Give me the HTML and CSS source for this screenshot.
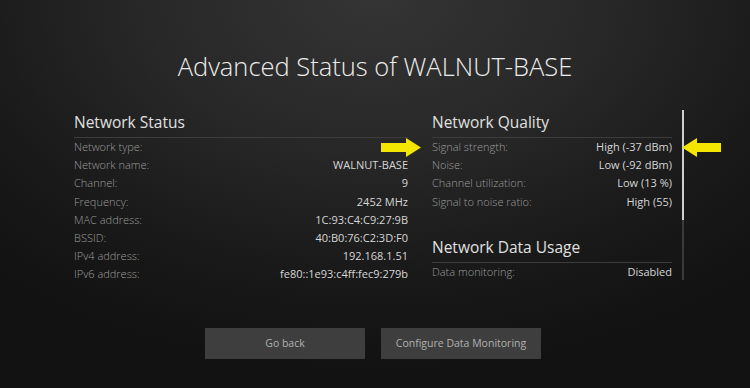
FILE: index.html
```html
<!DOCTYPE html>
<html>
<head>
<meta charset="utf-8">
<link rel="stylesheet" href="styles.css">
</head>
<body>
<main class="screen">
  <h1 class="title">Advanced Status of WALNUT-BASE</h1>
  <div class="panels">
    <section class="col col-left">
      <h2 class="heading">Network Status</h2>
      <div class="rows">
        <div class="row"><span class="label">Network type:</span><span class="value">WiFi</span></div>
        <div class="row"><span class="label">Network name:</span><span class="value">WALNUT-BASE</span></div>
        <div class="row"><span class="label">Channel:</span><span class="value">9</span></div>
        <div class="row"><span class="label">Frequency:</span><span class="value">2452 MHz</span></div>
        <div class="row"><span class="label">MAC address:</span><span class="value">1C:93:C4:C9:27:9B</span></div>
        <div class="row"><span class="label">BSSID:</span><span class="value">40:B0:76:C2:3D:F0</span></div>
        <div class="row"><span class="label">IPv4 address:</span><span class="value">192.168.1.51</span></div>
        <div class="row"><span class="label">IPv6 address:</span><span class="value">fe80::1e93:c4ff:fec9:279b</span></div>
      </div>
    </section>
    <section class="col col-right">
      <h2 class="heading">Network Quality</h2>
      <div class="rows">
        <div class="row"><span class="label">Signal strength:</span><span class="value">High (-37 dBm)</span></div>
        <div class="row"><span class="label">Noise:</span><span class="value">Low (-92 dBm)</span></div>
        <div class="row"><span class="label">Channel utilization:</span><span class="value">Low (13 %)</span></div>
        <div class="row"><span class="label">Signal to noise ratio:</span><span class="value">High (55)</span></div>
      </div>
      <h2 class="heading heading-spaced">Network Data Usage</h2>
      <div class="rows">
        <div class="row"><span class="label">Data monitoring:</span><span class="value">Disabled</span></div>
      </div>
    </section>
    <div class="scrollbar"><div class="thumb"></div></div>
  </div>
  <div class="buttons">
    <button class="btn">Go back</button>
    <button class="btn">Configure Data Monitoring</button>
  </div>
  <svg class="arrow arrow-right" width="40" height="19" viewBox="0 0 40 19"><polygon points="0,5 25,5 25,0 40,9.5 25,19 25,14 0,14" fill="#f4e600"/></svg>
  <svg class="arrow arrow-left" width="39" height="19" viewBox="0 0 39 19"><polygon points="39,5 15,5 15,0 0,9.5 15,19 15,14 39,14" fill="#f4e600"/></svg>
</main>
</body>
</html>
```
FILE: styles.css
```css
* { box-sizing: border-box; }
html, body { margin: 0; padding: 0; }
body {
  width: 750px;
  height: 388px;
  overflow: hidden;
  font-family: "Open Sans", "Noto Sans", sans-serif;
}
.screen {
  position: relative;
  width: 750px;
  height: 388px;
  background: radial-gradient(ellipse 75% 95% at 50% 0%, #343434 0%, #282828 40%, #191919 75%, #121212 100%);
}
.title {
  margin: 0;
  padding-top: 51px;
  font-size: 25.5px;
  line-height: 30px;
  font-weight: 300;
  color: #ececec;
  text-align: center;
}
.panels {
  display: flex;
  align-items: flex-start;
  margin-top: 31px;
  padding-left: 74px;
}
.col-left { width: 334px; }
.col-right { width: 240px; margin-left: 24px; }
.heading {
  margin: 0;
  font-size: 15.5px;
  line-height: 20px;
  font-weight: 400;
  color: #e0e0e0;
  padding-bottom: 5px;
  border-bottom: 1px solid #3c3c3c;
}
.heading-spaced { margin-top: 26px; }
.row {
  display: flex;
  justify-content: space-between;
  height: 18.2px;
  line-height: 18px;
  font-size: 11px;
}
.label { color: #9c9c9c; font-weight: 300; }
.value { color: #d6d6d6; }
.scrollbar {
  width: 2px;
  height: 170px;
  margin-left: 10px;
  margin-top: -2px;
  background: #3a3a3a;
}
.thumb {
  height: 110px;
  background: #cfcfcf;
}
.buttons {
  display: flex;
  justify-content: center;
  gap: 16px;
  margin-top: 44px;
  padding-right: 4px;
}
.btn {
  width: 160px;
  height: 31px;
  border: none;
  background: #3d3e3d;
  color: #b0b0b0;
  font-family: "Open Sans", "Noto Sans", sans-serif;
  font-size: 10.5px;
  padding: 0;
}
.arrow { position: absolute; }
.arrow-right { left: 381px; top: 138px; }
.arrow-left { left: 682px; top: 138px; }
```
